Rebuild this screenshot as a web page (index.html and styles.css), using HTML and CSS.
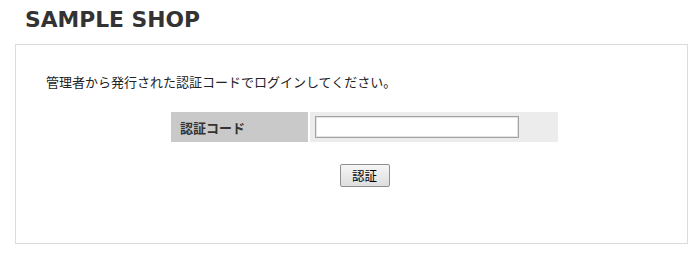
FILE: index.html
```html
<!DOCTYPE html>
<html lang="ja">
<head>
    <meta charset="UTF-8">
    <meta name="viewport" content="width=device-width, initial-scale=1.0">
    <title>SAMPLE SHOP</title>
    <link rel="stylesheet" href="styles.css">
</head>
<body>
    <h1 class="shop-title">SAMPLE SHOP</h1>

    <div class="login-box">
        <p class="message">管理者から発行された認証コードでログインしてください。</p>

        <form class="auth-form" onsubmit="return false;">
            <table class="auth-table">
                <tr>
                    <th class="auth-label">認証コード</th>
                    <td class="auth-value"><input type="text" class="auth-input" name="code"></td>
                </tr>
            </table>

            <div class="button-row">
                <button type="submit" class="auth-button">認証</button>
            </div>
        </form>
    </div>
</body>
</html>
```

FILE: styles.css
```css
body {
    margin: 0 11px 0 15px;
    font-family: "Noto Sans CJK JP", "DejaVu Sans", sans-serif;
    color: #222;
    background-color: #fff;
}

.shop-title {
    margin: 0;
    padding: 7px 0 0 10px;
    height: 37px;
    font-family: "DejaVu Sans", Verdana, sans-serif;
    font-size: 21.8px;
    font-weight: bold;
    line-height: 26px;
    color: #333;
}

.login-box {
    border: 1px solid #dcdcdc;
    height: 198px;
    padding: 0 4px 0 30px;
}

.message {
    margin: 27px 0 0 0;
    font-size: 13px;
    line-height: 19px;
    color: #222;
}

.auth-form {
    margin-top: 19px;
}

.auth-table {
    margin: 0 auto;
    border-spacing: 2px;
}

.auth-label {
    width: 119px;
    height: 30px;
    padding: 0 9px;
    background-color: #c9c9c9;
    text-align: left;
    font-size: 13px;
    font-weight: bold;
    color: #333;
}

.auth-value {
    width: 243px;
    height: 30px;
    padding: 0 0 0 5px;
    background-color: #ececec;
}

.auth-input {
    display: block;
    box-sizing: border-box;
    width: 204px;
    height: 22px;
    margin: 0;
    border: 1px solid #a3a3a3;
    box-shadow: inset 0 0 0 1px #e3e3e3;
    background-color: #fff;
}

.button-row {
    display: flex;
    justify-content: center;
    margin-top: 20px;
}

.auth-button {
    box-sizing: border-box;
    width: 50px;
    height: 23px;
    padding: 0;
    border: 1px solid #8f8f8f;
    border-radius: 2px;
    background: linear-gradient(#f6f6f6, #dedede);
    font-family: "Noto Sans CJK JP", sans-serif;
    font-size: 12.5px;
    color: #000;
    cursor: pointer;
}
```
